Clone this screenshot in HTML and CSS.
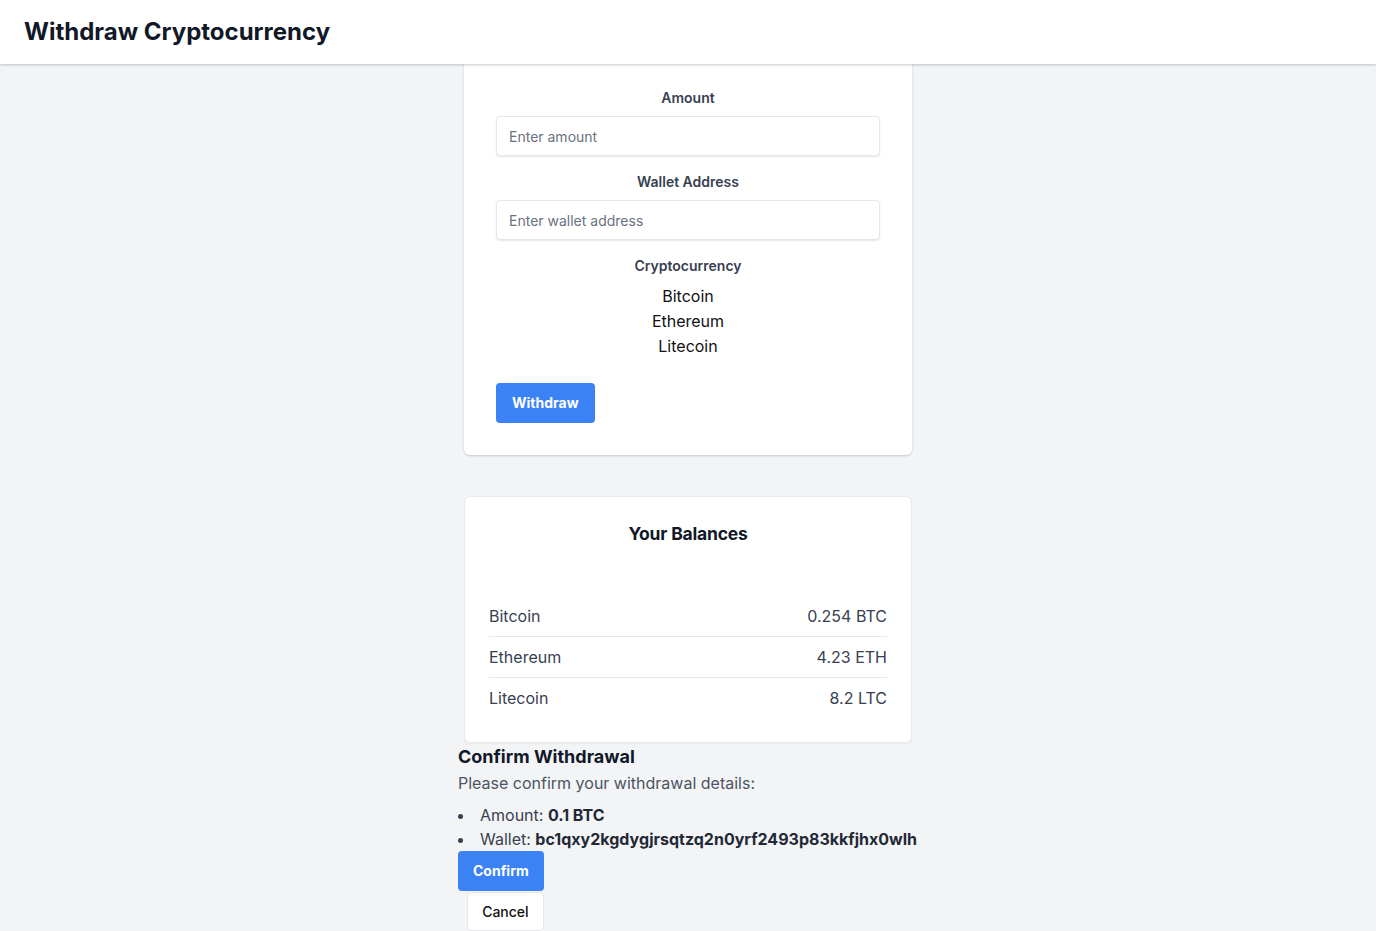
FILE: index.html
```html
<!DOCTYPE html>
<html lang="en">
<head>
<meta charset="utf-8">
<title>Withdraw Cryptocurrency</title>
<link rel="stylesheet" href="styles.css">
</head>
<body>
<header class="topbar">
  <h1 class="topbar-title">Withdraw Cryptocurrency</h1>
</header>
<main class="page">
  <form class="card withdraw-card">
    <label class="field-label" for="amount">Amount</label>
    <input class="field-input" id="amount" type="text" placeholder="Enter amount">
    <label class="field-label" for="wallet">Wallet Address</label>
    <input class="field-input" id="wallet" type="text" placeholder="Enter wallet address">
    <div class="field-label">Cryptocurrency</div>
    <ul class="coin-options">
      <li>Bitcoin</li>
      <li>Ethereum</li>
      <li>Litecoin</li>
    </ul>
    <div class="actions">
      <button type="button" class="btn btn-primary">Withdraw</button>
    </div>
  </form>

  <section class="card balances-card">
    <h2 class="balances-title">Your Balances</h2>
    <div class="balance-list">
      <div class="balance-row"><span>Bitcoin</span><span>0.254 BTC</span></div>
      <div class="balance-row"><span>Ethereum</span><span>4.23 ETH</span></div>
      <div class="balance-row"><span>Litecoin</span><span>8.2 LTC</span></div>
    </div>
  </section>

  <section class="confirm">
    <h3 class="confirm-title">Confirm Withdrawal</h3>
    <p class="confirm-text">Please confirm your withdrawal details:</p>
    <ul class="confirm-list">
      <li>Amount: <strong>0.1 BTC</strong></li>
      <li>Wallet: <strong>bc1qxy2kgdygjrsqtzq2n0yrf2493p83kkfjhx0wlh</strong></li>
    </ul>
    <div class="confirm-actions">
      <button type="button" class="btn btn-primary btn-confirm">Confirm</button>
      <button type="button" class="btn btn-secondary">Cancel</button>
    </div>
  </section>
</main>
</body>
</html>
```

FILE: styles.css
```css
* { box-sizing: border-box; }

html, body {
  margin: 0;
  padding: 0;
}

body {
  background: #f3f4f6;
  font-family: Inter, "Noto Sans", "Liberation Sans", sans-serif;
  color: #111827;
  overflow: hidden;
}

.topbar {
  position: relative;
  z-index: 10;
  height: 64px;
  background: #ffffff;
  padding: 16px 24px;
  box-shadow: 0 1px 3px rgba(0,0,0,0.14), 0 1px 2px rgba(0,0,0,0.08);
}

.topbar-title {
  margin: 0;
  font-size: 24px;
  line-height: 32px;
  font-weight: 700;
  color: #111827;
}

.page {
  display: flex;
  flex-direction: column;
  align-items: center;
  margin-top: -8px;
}

.card {
  background: #ffffff;
  border-radius: 6px;
}

.withdraw-card {
  width: 448px;
  padding: 32px;
  display: flex;
  flex-direction: column;
  box-shadow: 0 1px 3px rgba(0,0,0,0.12), 0 1px 2px rgba(0,0,0,0.06);
}

.field-label {
  display: block;
  text-align: center;
  font-size: 14px;
  line-height: 20px;
  font-weight: 600;
  color: #374151;
  margin-bottom: 8px;
}

.field-input {
  width: 100%;
  height: 40px;
  border: 1px solid #e5e7eb;
  border-radius: 4px;
  padding: 0 12px;
  font-family: inherit;
  font-size: 14px;
  color: #111827;
  background: #fff;
  box-shadow: 0 1px 2px rgba(0,0,0,0.1);
  margin-bottom: 16px;
}

.field-input::placeholder {
  color: #6b7280;
}

.coin-options {
  list-style: none;
  margin: 0;
  padding: 0;
  text-align: center;
  font-size: 16px;
  line-height: 25px;
  color: #111111;
}

.actions {
  margin-top: 24px;
  display: flex;
}

.btn {
  height: 40px;
  padding: 0 16px;
  border-radius: 4px;
  font-family: inherit;
  font-size: 14px;
  line-height: 20px;
  cursor: pointer;
}

.btn-primary {
  background: #3b82f6;
  color: #ffffff;
  font-weight: 700;
  border: none;
  padding-bottom: 1px;
}

.btn-confirm {
  padding: 0 15px 1px;
}

.btn-secondary {
  background: #ffffff;
  color: #111111;
  font-weight: 500;
  border: 1px solid #e5e7eb;
  height: 39px;
  padding: 0 14px;
  margin-top: 1px;
  margin-left: 9px;
}

.balances-card {
  width: 448px;
  margin-top: 41px;
  padding: 24px;
  border: 1px solid #e9eaec;
  box-shadow: 0 1px 2px rgba(0,0,0,0.05);
}

.balances-title {
  margin: -1px 0 0;
  text-align: center;
  font-size: 17.5px;
  line-height: 28px;
  font-weight: 700;
  letter-spacing: -0.2px;
  color: #111827;
}

.balance-list {
  margin-top: 48px;
}

.balance-row {
  display: flex;
  justify-content: space-between;
  align-items: center;
  height: 41px;
  font-size: 16px;
  color: #374151;
  border-bottom: 1px solid #e5e7eb;
}

.balance-row:last-child {
  border-bottom: none;
  height: 40px;
}

.confirm {
  display: flex;
  flex-direction: column;
  align-items: flex-start;
  min-width: 460px;
}

.confirm-title {
  margin: 0;
  font-size: 18px;
  line-height: 28px;
  font-weight: 700;
  color: #111827;
}

.confirm-text {
  margin: 0 0 8px;
  font-size: 16px;
  line-height: 24px;
  color: #4b5563;
}

.confirm-list {
  margin: 0;
  padding: 0;
  list-style: disc inside;
  font-size: 16px;
  line-height: 24px;
  color: #374151;
}

.confirm-list strong {
  font-weight: 700;
  color: #1f2937;
}

.confirm-actions {
  display: flex;
  flex-direction: column;
  align-items: stretch;
}
```
